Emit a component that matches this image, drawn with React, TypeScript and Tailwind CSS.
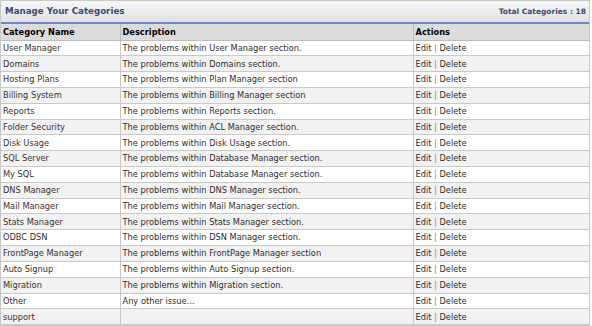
const categories = [
  ['User Manager', 'The problems within User Manager section.'],
  ['Domains', 'The problems within Domains section.'],
  ['Hosting Plans', 'The problems within Plan Manager section'],
  ['Billing System', 'The problems within Billing Manager section'],
  ['Reports', 'The problems within Reports section.'],
  ['Folder Security', 'The problems within ACL Manager section.'],
  ['Disk Usage', 'The problems within Disk Usage section.'],
  ['SQL Server', 'The problems within Database Manager section.'],
  ['My SQL', 'The problems within Database Manager section.'],
  ['DNS Manager', 'The problems within DNS Manager section.'],
  ['Mail Manager', 'The problems within Mail Manager section.'],
  ['Stats Manager', 'The problems within Stats Manager section.'],
  ['ODBC DSN', 'The problems within DSN Manager section.'],
  ['FrontPage Manager', 'The problems within FrontPage Manager section'],
  ['Auto Signup', 'The problems within Auto Signup section.'],
  ['Migration', 'The problems within Migration section.'],
  ['Other', 'Any other issue...'],
  ['support', ''],
];

export default function App() {
  return (
    <div className="w-[592px] h-[326px] bg-white overflow-hidden" style={{ fontFamily: '"DejaVu Sans", Verdana, sans-serif' }}>
      <div className="w-[590px] border border-[#c9c9c9]">
        <div className="h-[23px] flex items-center justify-between pl-[4px] pr-[3px] bg-gradient-to-b from-[#f7f7f7] to-[#e2e2e2] border-b-2 border-[#6f86cf]">
          <span className="text-[8.7px] font-bold text-[#3b4a78]">Manage Your Categories</span>
          <span className="text-[7.5px] font-bold text-[#3b4a78]">Total Categories : 18</span>
        </div>
        <table className="w-full border-collapse text-[8.25px] text-[#2e2e2e]">
          <thead>
            <tr className="bg-[#dcdcdc] h-[16px]">
              <th className="w-[119px] text-left font-bold text-black px-[2px] border-r border-b border-[#bdbdbd]">Category Name</th>
              <th className="w-[293px] text-left font-bold text-black px-[2px] border-r border-b border-[#bdbdbd]">Description</th>
              <th className="text-left font-bold text-black px-[2px] border-b border-[#bdbdbd]">Actions</th>
            </tr>
          </thead>
          <tbody>
            {categories.map(([name, desc], i) => (
              <tr key={name} className={`h-[15.82px] ${i % 2 === 1 ? 'bg-[#f2f2f2]' : 'bg-white'}`}>
                <td className="px-[2px] py-0 border-r border-b border-[#c9c9c9] text-[#3a2f2f]">{name}</td>
                <td className="px-[2px] py-0 border-r border-b border-[#c9c9c9]">{desc}</td>
                <td className="px-[2px] py-0 border-b border-[#c9c9c9]">
                  Edit <span className="text-[#6f86cf]">|</span> Delete
                </td>
              </tr>
            ))}
          </tbody>
        </table>
      </div>
    </div>
  );
}
